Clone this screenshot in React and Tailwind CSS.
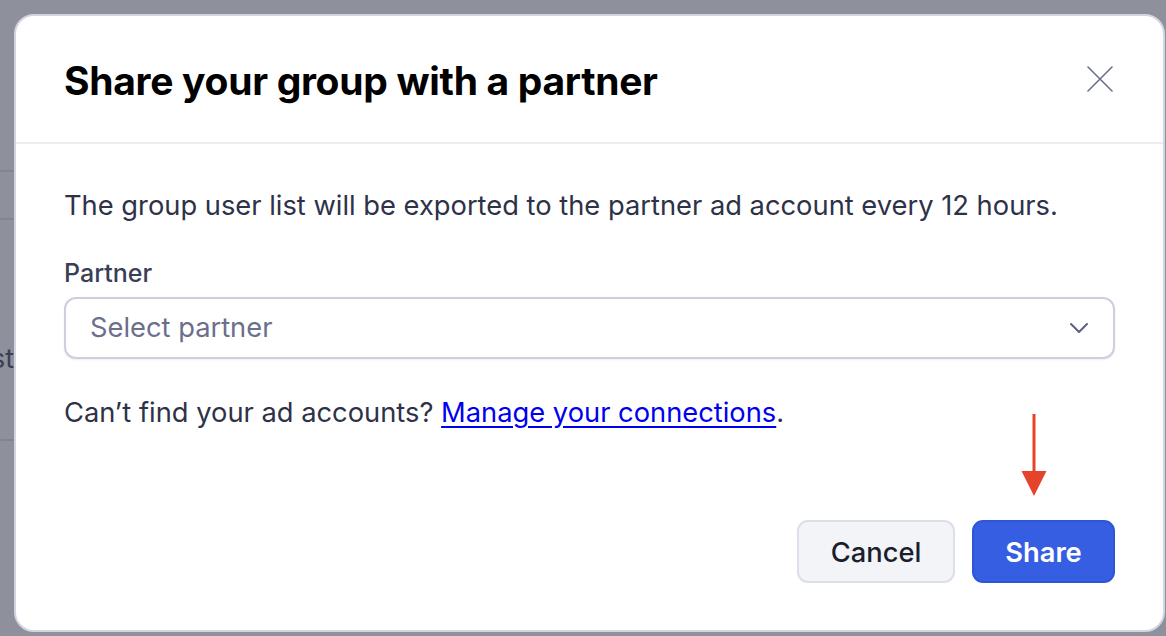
import React from 'react';

const font = { fontFamily: 'Inter, "Liberation Sans", sans-serif' };

function CloseIcon() {
  return (
    <svg width="26" height="26" viewBox="0 0 26 26" fill="none" stroke="#6b7089" strokeWidth="1.6" strokeLinecap="round">
      <path d="M1 1L25 25M25 1L1 25" />
    </svg>
  );
}

function Chevron() {
  return (
    <svg width="20" height="12" viewBox="0 0 20 12" fill="none" stroke="#5b6080" strokeWidth="2" strokeLinecap="round" strokeLinejoin="round">
      <path d="M2 2l8 8 8-8" />
    </svg>
  );
}

function DownArrow() {
  return (
    <svg width="28" height="84" viewBox="0 0 28 84" className="block">
      <path d="M14 0V60" stroke="#e5432a" strokeWidth="3" />
      <path d="M1.5 57H26.5L14 82Z" fill="#e5432a" />
    </svg>
  );
}

export default function App() {
  return (
    <div className="relative h-[636px] w-[1166px] overflow-hidden bg-[#8e909b]" style={font}>
      {/* page behind the overlay */}
      <div className="flex h-full w-[14px] flex-col">
        <div className="h-[170px]" />
        <div className="h-[50px] border-y-2 border-[#82848f]" />
        <div className="flex h-[221px] items-end justify-end border-b-2 border-[#82848f] pb-[62px]">
          <span className="whitespace-nowrap text-[27px] leading-[36px] text-[#3a3e54]">list</span>
        </div>
      </div>

      <div className="absolute left-[14px] top-[14px] flex h-[618px] w-[1151px] flex-col rounded-[20px] border-2 border-[#d3d4e2] bg-white">
        <div className="flex h-[128px] items-center justify-between border-b-2 border-[#ececf2] pl-[48px] pr-[50px]">
          <h2 className="pt-[5px] text-[39px] font-bold tracking-[-0.3px] text-black">Share your group with a partner</h2>
          <button type="button" className="flex h-[26px] w-[26px] items-center justify-center">
            <CloseIcon />
          </button>
        </div>

        <div className="flex flex-1 flex-col px-[48px] pt-[44px]">
          <p className="text-[27.3px] leading-[36px] text-[#2e3248]">
            The group user list will be exported to the partner ad account every 12 hours.
          </p>

          <label className="mt-[35px] text-[25px] font-medium leading-[28px] text-[#3a3e56]">Partner</label>
          <div className="mt-[10px] flex h-[62px] items-center justify-between rounded-[12px] border-2 border-[#cdcfdf] bg-white pl-[24px] pr-[24px] shadow-[0_1px_2px_rgba(30,35,70,0.08)]">
            <span className="pt-[1px] text-[27.3px] text-[#6b6f8c]">Select partner</span>
            <Chevron />
          </div>

          <p className="mt-[36px] text-[27.3px] leading-[36px] text-[#2e3248]">
            Can’t find your ad accounts?{' '}
            <a href="#" className="text-[#0000ee] underline underline-offset-[4px]">Manage your connections</a>.
          </p>

          <div className="relative mt-auto mb-[47px] flex justify-end gap-[17px]">
            <div className="absolute right-[67px] bottom-[85px]">
              <DownArrow />
            </div>
            <button type="button" className="h-[63px] w-[158px] rounded-[11px] border-2 border-[#dcdee8] bg-[#f3f4f8] pt-[3px] text-[27.3px] font-medium text-[#1b1e2e]">
              Cancel
            </button>
            <button type="button" className="h-[63px] w-[143px] rounded-[11px] border-2 border-[#2f55d4] bg-[#355ee3] pt-[3px] text-[27.3px] font-semibold text-white">
              Share
            </button>
          </div>
        </div>
      </div>
    </div>
  );
}
